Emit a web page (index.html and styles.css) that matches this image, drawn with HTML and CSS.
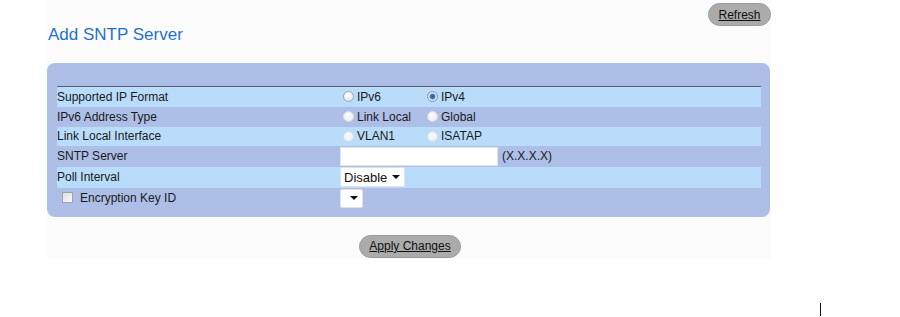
FILE: index.html
```html
<!DOCTYPE html>
<html lang="en">

<head>
  <meta charset="UTF-8">
  <title>Add SNTP Server</title>
  <link rel="stylesheet" href="styles.css">
</head>

<body>
  <div class="page">
    <div class="toolbar">
      <a href="#" class="btn">Refresh</a>
    </div>

    <h1 class="title">Add SNTP Server</h1>

    <div class="panel">
      <table class="form-table">
        <tr class="light">
          <td class="label">Supported IP Format</td>
          <td>
            <div class="opts">
              <label class="opt"><span class="radio"></span>IPv6</label>
              <label class="opt"><span class="radio checked"></span>IPv4</label>
            </div>
          </td>
        </tr>
        <tr>
          <td class="label">IPv6 Address Type</td>
          <td>
            <div class="opts">
              <label class="opt"><span class="radio disabled"></span>Link Local</label>
              <label class="opt"><span class="radio disabled"></span>Global</label>
            </div>
          </td>
        </tr>
        <tr class="light short">
          <td class="label">Link Local Interface</td>
          <td>
            <div class="opts">
              <label class="opt"><span class="radio disabled"></span>VLAN1</label>
              <label class="opt"><span class="radio disabled"></span>ISATAP</label>
            </div>
          </td>
        </tr>
        <tr class="tall">
          <td class="label">SNTP Server</td>
          <td>
            <span class="textbox"></span><span class="hint">(X.X.X.X)</span>
          </td>
        </tr>
        <tr class="light tall">
          <td class="label">Poll Interval</td>
          <td>
            <span class="select">Disable<span class="arrow"></span></span>
          </td>
        </tr>
        <tr class="tall">
          <td class="label">
            <span class="checkbox"></span>Encryption Key ID
          </td>
          <td>
            <span class="select empty"><span class="arrow"></span></span>
          </td>
        </tr>
      </table>
    </div>

    <div class="actions">
      <a href="#" class="btn">Apply Changes</a>
    </div>
  </div>

  <div class="marker"></div>
</body>

</html>
```

FILE: styles.css
```css
* {
  margin: 0;
  padding: 0;
  box-sizing: border-box;
}

body {
  font-family: 'Liberation Sans', Arial, sans-serif;
  font-size: 12px;
  color: #1a1a1a;
  background: white;
}

.page {
  width: 725px;
  height: 259px;
  margin-left: 46px;
  background: #fcfcfc;
}

.toolbar {
  display: flex;
  justify-content: flex-end;
  padding-top: 3px;
}

.btn {
  display: inline-flex;
  align-items: center;
  justify-content: center;
  height: 23px;
  padding: 0 11px;
  background: #ababab;
  border: 1px solid #9c9c9c;
  border-radius: 12px;
  color: #111;
  text-decoration: underline;
  font-size: 12px;
}

.toolbar .btn {
  width: 63px;
}

.title {
  font-size: 17px;
  font-weight: normal;
  line-height: 20px;
  color: #1f70d2;
  margin: -1px 0 18px 2px;
}

.panel {
  width: 723px;
  margin-left: 1px;
  padding: 23px 9px 8px 10px;
  background: #adbfe7;
  border-radius: 8px;
}

.form-table {
  width: 100%;
  border-collapse: collapse;
  border-top: 1px solid #5b5f6e;
}

.form-table tr {
  height: 20px;
}

.form-table tr.short {
  height: 19px;
}

.form-table tr.tall {
  height: 21px;
}

.form-table tr.light {
  background: #b8dcfa;
}

.form-table td {
  padding: 0;
  vertical-align: middle;
  white-space: nowrap;
}

.form-table td.label {
  width: 283px;
}

.opts {
  display: flex;
}

.opt {
  display: flex;
  align-items: center;
  width: 84px;
  padding-left: 3px;
}

.radio {
  display: inline-block;
  width: 11px;
  height: 11px;
  margin-right: 3px;
  border-radius: 50%;
  border: 1px solid #a0a4ae;
  background: radial-gradient(circle at 40% 35%, #ffffff, #dcdde2);
}

.radio.checked {
  background: radial-gradient(circle, #1d5a9e 0, #3f86c9 2.5px, #e8e9ee 3.5px, #d8d9de 100%);
  border-color: #8e939e;
}

.radio.disabled {
  border-color: #d8dbe2;
  background: radial-gradient(circle at 40% 35%, #fafafa, #e9eaee);
}

.textbox {
  display: inline-block;
  width: 158px;
  height: 19px;
  background: white;
  border: 1px solid #e2e4ea;
  vertical-align: middle;
}

.hint {
  margin-left: 4px;
  vertical-align: middle;
}

.select {
  display: inline-flex;
  align-items: center;
  width: 65px;
  height: 20px;
  padding-left: 3px;
  background: white;
  border: 1px solid #dfe2e8;
  border-radius: 2px;
  font-size: 13px;
  color: #111;
  vertical-align: middle;
}

.select .arrow {
  margin-left: auto;
  margin-right: 4px;
  width: 0;
  height: 0;
  border-left: 4px solid transparent;
  border-right: 4px solid transparent;
  border-top: 4px solid #111;
}

.select.empty {
  width: 23px;
  height: 19px;
}

.checkbox {
  display: inline-block;
  width: 11px;
  height: 11px;
  margin: 0 7px 0 5px;
  border: 1px solid #9ea3ad;
  background: linear-gradient(135deg, #dcdde2, #fbfbfb);
  vertical-align: -1px;
}

.actions {
  display: flex;
  padding-left: 313px;
  margin-top: 18px;
}

.actions .btn {
  width: 102px;
  padding: 0;
}

.marker {
  width: 1px;
  height: 13px;
  margin: 44px 0 0 820px;
  background: #111;
}
```
